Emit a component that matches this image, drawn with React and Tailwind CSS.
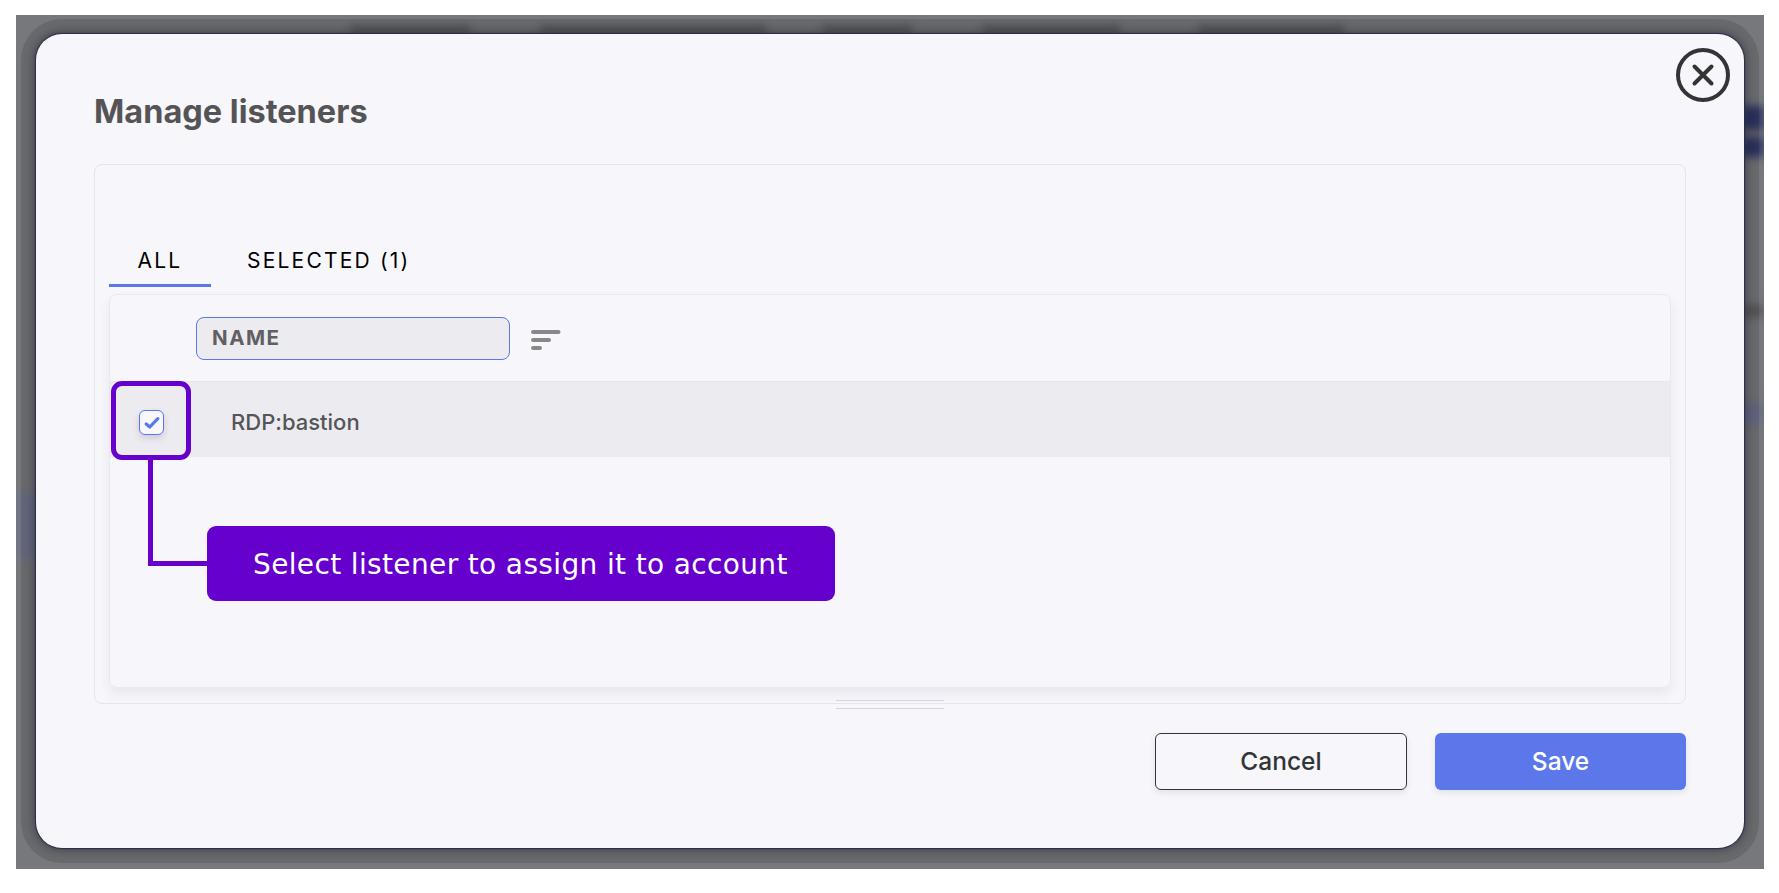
import React from "react";

// blurred page behind the dialog, only a few bits of it show around the edge
function Backdrop() {
  return (
    <div className="absolute inset-0 blur-[4px] [background:linear-gradient(#2f3566,#2f3566)_1725px_91px/40px_24px_no-repeat,linear-gradient(#2f3566,#2f3566)_1725px_122px/40px_20px_no-repeat,linear-gradient(#5a5a5c,#5a5a5c)_1725px_290px/40px_12px_no-repeat,linear-gradient(#6b6f8a,#6b6f8a)_1725px_388px/40px_22px_no-repeat,linear-gradient(#70748a,#70748a)_0_478px/25px_66px_no-repeat,linear-gradient(#55565a,#55565a)_334px_11px/120px_8px_no-repeat,linear-gradient(#55565a,#55565a)_524px_11px/226px_8px_no-repeat,linear-gradient(#55565a,#55565a)_806px_11px/90px_8px_no-repeat,linear-gradient(#55565a,#55565a)_966px_11px/138px_8px_no-repeat,linear-gradient(#55565a,#55565a)_1182px_11px/146px_8px_no-repeat]" />
  );
}

function CloseIcon() {
  return (
    <svg width="56" height="56" viewBox="0 0 56 56" fill="none" stroke="#333436" strokeLinecap="round">
      <circle cx="28" cy="28" r="25" strokeWidth="4" />
      <path d="M19.5 19.5L36.5 36.5M36.5 19.5L19.5 36.5" strokeWidth="4" />
    </svg>
  );
}

function SortIcon() {
  return (
    <svg width="30" height="22" viewBox="0 0 30 22" fill="none" stroke="#88888a" strokeWidth="4" strokeLinecap="round">
      <path d="M2 3H27.5M2 11H18M2 19H9" />
    </svg>
  );
}

function Annotation() {
  return (
    <>
      <div className="absolute left-[1px] top-[86px] h-[79px] w-[80px] rounded-[11px] border-[5px] border-[#6600cc]" />
      <div className="absolute left-[38px] top-[165px] h-[106px] w-[60px] border-b-[5px] border-l-[5px] border-[#6600cc]" />
      <div className="absolute left-[97px] top-[231px] flex h-[75px] w-[628px] items-center rounded-[9px] bg-[#6600cc] pl-[46px] pt-[3px] font-['DejaVu_Sans',sans-serif] text-[28px] tracking-[0.36px] text-white">
        Select listener to assign it to account
      </div>
    </>
  );
}

export default function App() {
  return (
    <div className="h-[893px] w-full bg-white pb-[24px] pl-[16px] pt-[15px] font-['Inter',sans-serif]">
      <div className="relative h-[854px] w-[1748px] overflow-hidden bg-[#77787c] pl-[20px] pt-[19px]">
        <Backdrop />
        <div className="relative flex h-[814px] w-[1708px] flex-col rounded-[26px] bg-[#f6f6fb] px-[58px] pt-[54px] shadow-[0_0_1px_1px_#2a2d45,0_0_8px_2px_rgba(20,20,40,0.45),0_0_0_15px_rgba(0,0,0,0.12)]">
          <button className="absolute right-[13px] top-[13px]">
            <CloseIcon />
          </button>

          <h1 className="text-[32.5px] font-bold leading-[47px] text-[#545456]">Manage listeners</h1>

          <div className="mt-[29px] h-[540px] rounded-[8px] border border-[#e4e5ee] px-[14px] pt-[76px]">
            <div className="flex h-[53px]">
              <div className="flex h-[46px] w-[102px] items-center justify-center border-b-[3px] border-[#5b77ea] pb-[3px] text-[21px] tracking-[2.2px] text-black">
                ALL
              </div>
              <div className="ml-[36px] flex h-[46px] items-center pb-[6px] text-[21px] tracking-[2.2px] text-black">
                SELECTED (1)
              </div>
            </div>

            <div className="relative h-[394px] rounded-[8px] border border-[#e9e9f0] shadow-[0_6px_12px_rgba(60,60,90,0.08)]">
              <div className="flex h-[87px] items-center border-b border-[#e6e6ec] pl-[86px]">
                <div className="flex h-[43px] w-[314px] items-center rounded-[8px] border border-[#5b77ea] bg-[#ecebf0] pl-[15px] pt-[1px] text-[20.5px] font-bold tracking-[1.5px] text-[#605f63]">
                  NAME
                </div>
                <div className="ml-[21px] mt-[4px]">
                  <SortIcon />
                </div>
              </div>
              <div className="flex h-[75px] items-center bg-[#ecebf0] pt-[6px]">
                <div className="w-[121px] pl-[29px]">
                  <div className="flex h-[25px] w-[25px] items-center justify-center rounded-[6px] border border-[#5b77ea] bg-[#f7f7fc] shadow-[0_3px_6px_rgba(60,60,90,0.18)]">
                    <svg width="16" height="14" viewBox="0 0 16 14" fill="none" stroke="#5b77ea" strokeWidth="3.2" strokeLinecap="round" strokeLinejoin="round">
                      <path d="M2.2 8L5.8 11L13.8 2.6" />
                    </svg>
                  </div>
                </div>
                <span className="text-[22px] font-medium text-[#555558]">RDP:bastion</span>
              </div>
              <Annotation />
            </div>
          </div>

          <div className="relative h-0 w-full">
            <div className="absolute left-[742px] top-[-4px] h-[9px] w-[108px] border-y border-[#d6d5dc]" />
          </div>

          <div className="mt-[29px] flex justify-end gap-[28px] text-[24.5px] font-medium">
            <button className="h-[57px] w-[252px] rounded-[6px] border border-[#333436] text-[#333436] shadow-[0_3px_6px_rgba(60,60,90,0.1)]">
              Cancel
            </button>
            <button className="h-[57px] w-[251px] rounded-[6px] bg-[#5b77ea] text-white shadow-[0_3px_6px_rgba(60,60,90,0.1)]">
              Save
            </button>
          </div>
        </div>
      </div>
    </div>
  );
}
